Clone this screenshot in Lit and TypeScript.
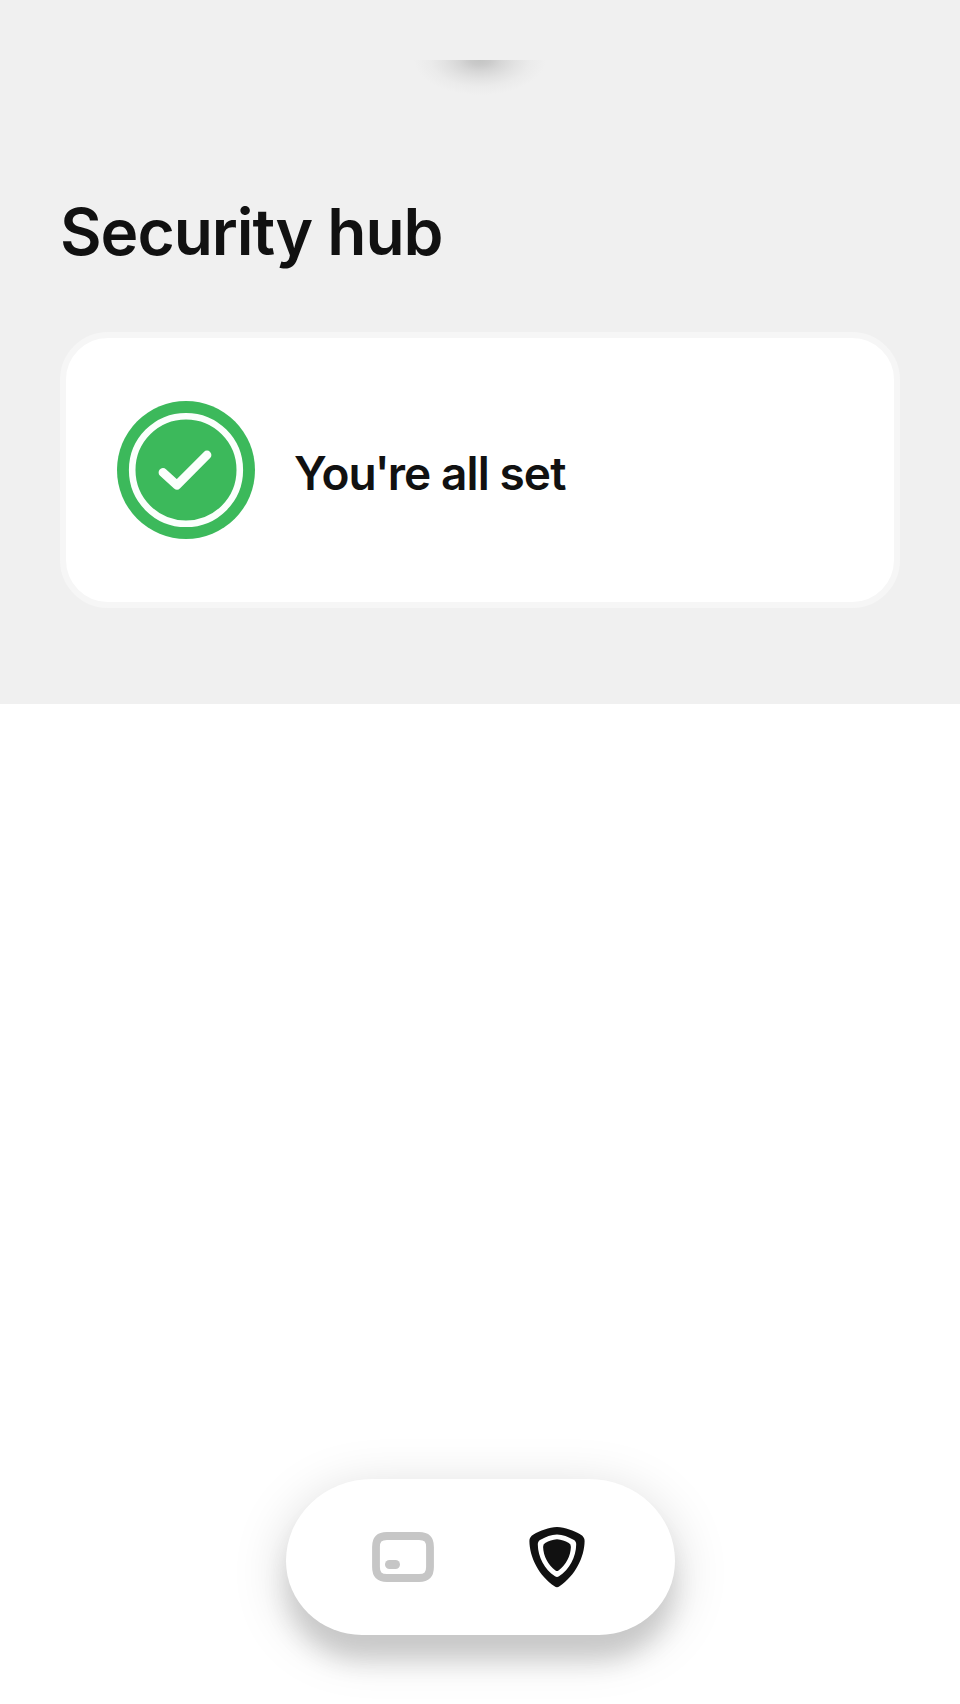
import { LitElement, html, css } from "lit";
import { customElement } from "lit/decorators.js";

@customElement("app-root")
export class AppRoot extends LitElement {
  static styles = css`
    :host {
      display: flex;
      flex-direction: column;
      height: 1704px;
      overflow: hidden;
      background: #fff;
      color: #111;
      font-family: Inter, "Liberation Sans", sans-serif;
      -webkit-font-smoothing: antialiased;
    }
    * { box-sizing: border-box; }
    .hub {
      display: flex;
      flex-direction: column;
      height: 704px;
      padding: 60px 60px 0;
      background: #f0f0f0;
      flex: none;
    }
    .glow {
      align-self: center;
      width: 132px;
      height: 35px;
      background: radial-gradient(ellipse 66px 35px at 50% 0,
        #c4c5c4 0%, #cacaca 15%, #d7d7d7 33%, #e2e2e2 53%, #ebebeb 75%, #f0f0f0 100%);
    }
    .title {
      margin: 97px 0 0;
      height: 80px;
      font-size: 64px;
      line-height: 80px;
      font-weight: 600;
      letter-spacing: -1.02px;
      white-space: nowrap;
    }
    .card {
      display: flex;
      align-items: center;
      gap: 39px;
      height: 276px;
      margin-top: 60px;
      padding: 0 51px;
      border: 6px solid #f6f6f6;
      border-radius: 48px;
      background: #fff;
    }
    .badge { display: block; flex: none; }
    .status {
      font-size: 46px;
      line-height: 56px;
      font-weight: 560;
      letter-spacing: -0.9px;
      padding-top: 6px;
      white-space: nowrap;
    }
    .tight { letter-spacing: -2px; }
    .tabs {
      display: flex;
      align-items: center;
      align-self: center;
      width: 389px;
      height: 156px;
      margin: auto 0 69px;
      padding-left: 82px;
      gap: 84px;
      background: #fff;
      border-radius: 86px 86px 76px 76px / 82px 82px 74px 74px;
      box-shadow: 0 26px 26px -4px #c8c8c8, 0 12px 54px rgba(0, 0, 0, 0.17);
    }
    .icon { display: block; flex: none; }
  `;

  render() {
    return html`
      <section class="hub">
        <div class="glow"></div>
        <h1 class="title">Security hub</h1>
        <div class="card">
          <svg class="badge" width="138" height="138" viewBox="0 0 138 138">
            <circle cx="69" cy="69" r="69" fill="#3cb95b" />
            <circle cx="69" cy="69" r="53.8" fill="none" stroke="#fbfffc" stroke-width="6.6" />
            <path d="M46 71.5 60 84.2 90 54" fill="none" stroke="#fbfffc"
              stroke-width="8.8" stroke-linecap="round" stroke-linejoin="round" />
          </svg>
          <span class="status">Yo<span class="tight">u'</span>re all set</span>
        </div>
      </section>
      <nav class="tabs">
        <svg class="icon" width="70" height="70" viewBox="368 1522 70 70">
          <path d="M387 1536H419C427 1536 430 1540 430 1547V1567C430 1574 427 1578 419 1578H387C379 1578 376 1574 376 1567V1547C376 1540 379 1536 387 1536Z"
            fill="none" stroke="#c6c6c6" stroke-width="7.8" />
          <rect x="385" y="1560" width="15" height="9" rx="4.5" fill="#c6c6c6" />
        </svg>
        <svg class="icon" width="70" height="70" viewBox="522 1522 70 70">
          <path d="M557 1527C565 1527.300 574 1530.700 580.500 1534.500Q584.700 1537 584.600 1541C584.500 1557 575 1576 559.500 1586.200Q557 1588.200 554.500 1586.200C539 1576 529.500 1557 529.400 1541Q529.300 1537 533.500 1534.500C540 1530.700 549 1527.300 557 1527Z" fill="#111" />
          <path d="M557 1534.500C563 1534.800 568 1536.700 573.500 1539.700Q576.300 1541.200 576.200 1544.500C576 1557 569.500 1569.500 559 1576.300Q557 1577.800 555 1576.300C544.500 1569.500 538 1557 537.800 1544.500Q537.700 1541.200 540.500 1539.700C546 1536.700 551 1534.800 557 1534.500Z" fill="#fff" />
          <path d="M557 1539.300C561.500 1539.500 565 1541 568.800 1543Q571 1544.200 570.900 1547C570.600 1556 566 1565 558.500 1570.500Q557 1571.600 555.500 1570.500C548 1565 543.400 1556 543.100 1547Q543 1544.200 545.200 1543C549 1541 552.500 1539.500 557 1539.300Z" fill="#111" />
        </svg>
      </nav>
    `;
  }
}
